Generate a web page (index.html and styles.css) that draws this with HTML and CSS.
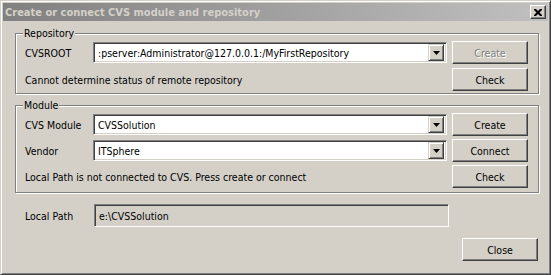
FILE: index.html
```html
<!DOCTYPE html>
<html lang="en">
<head>
  <meta charset="UTF-8">
  <title>Create or connect CVS module and repository</title>
  <link rel="stylesheet" href="styles.css">
</head>
<body>
  <div class="window">
    <div class="titlebar">
      <span class="title">Create or connect CVS module and repository</span>
      <span class="close-box">
        <svg width="8" height="7" viewBox="0 0 8 7">
          <path d="M0 0h2l2 2 2-2h2v1l-2.5 2.5 2.5 2.5v1h-2l-2-2-2 2h-2v-1l2.5-2.5-2.5-2.5z" fill="#000"/>
        </svg>
      </span>
    </div>

    <div class="content">
      <fieldset class="group">
        <legend>Repository</legend>
        <div class="grid">
          <span class="label">CVSROOT</span>
          <div class="combo">
            <span class="combo-text">:pserver:Administrator@127.0.0.1:/MyFirstRepository</span>
            <span class="drop"><svg width="7" height="4" viewBox="0 0 7 4"><path d="M0 0h7l-3.5 4z" fill="#000"/></svg></span>
          </div>
          <button class="btn" disabled>Create</button>

          <span class="note">Cannot determine status of remote repository</span>
          <button class="btn">Check</button>
        </div>
      </fieldset>

      <fieldset class="group group-module">
        <legend>Module</legend>
        <div class="grid grid-module">
          <span class="label">CVS Module</span>
          <div class="combo">
            <span class="combo-text">CVSSolution</span>
            <span class="drop"><svg width="7" height="4" viewBox="0 0 7 4"><path d="M0 0h7l-3.5 4z" fill="#000"/></svg></span>
          </div>
          <button class="btn">Create</button>

          <span class="label">Vendor</span>
          <div class="combo">
            <span class="combo-text">ITSphere</span>
            <span class="drop"><svg width="7" height="4" viewBox="0 0 7 4"><path d="M0 0h7l-3.5 4z" fill="#000"/></svg></span>
          </div>
          <button class="btn">Connect</button>

          <span class="note">Local Path is not connected to CVS. Press create or connect</span>
          <button class="btn">Check</button>
        </div>
      </fieldset>

      <div class="path-row">
        <span class="label">Local Path</span>
        <div class="field">e:\CVSSolution</div>
      </div>

      <div class="footer">
        <button class="btn btn-close">Close</button>
      </div>
    </div>
  </div>
</body>
</html>
```

FILE: styles.css
```css
body {
  margin: 0;
  padding: 0;
  background: #d4d0c8;
  font-family: "DejaVu Sans Condensed", "Liberation Sans", sans-serif;
  font-size: 10px;
  color: #000;
}
.window {
  width: 551px;
  height: 275px;
  box-sizing: border-box;
  padding: 2px;
  background: #d4d0c8;
  border: 1px solid;
  border-color: #d4d0c8 #404040 #404040 #d4d0c8;
  box-shadow: inset 1px 1px 0 #fff, inset -1px -1px 0 #808080;
}
.titlebar {
  height: 18px;
  display: flex;
  align-items: center;
  justify-content: space-between;
  padding: 0 2px 0 2px;
  background: linear-gradient(to right, #808080, #c0c0c0);
}
.title {
  color: #d4d0c8;
  font-size: 11px;
  font-weight: bold;
}
.close-box {
  width: 16px;
  height: 14px;
  box-sizing: border-box;
  display: flex;
  align-items: center;
  justify-content: center;
  background: #d4d0c8;
  border: 1px solid;
  border-color: #fff #404040 #404040 #fff;
  box-shadow: inset -1px -1px 0 #808080;
}
.content {
  padding: 6px 0 0 12px;
}
.group {
  margin: 0;
  width: 524px;
  box-sizing: border-box;
  padding: 1px 9px 2px 9px;
  border: 1px solid #808080;
  box-shadow: inset 1px 1px 0 #fff, 1px 1px 0 #fff;
}
.group legend {
  padding: 0 1px;
  margin-left: -2px;
  line-height: 13px;
  font-size: 10.5px;
  background: #d4d0c8;
}
.group-module {
  margin-top: 5px;
  padding-bottom: 4px;
}
.grid {
  display: grid;
  grid-template-columns: 63px 354px 76px;
  grid-auto-rows: 23px;
  column-gap: 5px;
  row-gap: 4px;
  align-items: center;
}
.grid-module {
  row-gap: 3px;
}
.label,
.note {
  font-size: 10.5px;
}
.note {
  grid-column: 1 / 3;
}
.combo {
  height: 21px;
  box-sizing: border-box;
  display: flex;
  align-items: center;
  justify-content: space-between;
  padding: 0 2px 0 3px;
  background: #fff;
  border: 1px solid;
  border-color: #808080 #fff #fff #808080;
  box-shadow: inset 1px 1px 0 #404040, inset -1px -1px 0 #d4d0c8;
}
.combo-text {
  padding-left: 1px;
  font-size: 10.5px;
}
.drop {
  width: 16px;
  height: 17px;
  box-sizing: border-box;
  display: flex;
  align-items: center;
  justify-content: center;
  background: #d4d0c8;
  border: 1px solid;
  border-color: #d4d0c8 #404040 #404040 #d4d0c8;
  box-shadow: inset 1px 1px 0 #fff, inset -1px -1px 0 #808080;
}
.btn {
  height: 23px;
  padding: 0;
  font-family: inherit;
  font-size: 10.5px;
  color: #000;
  background: #d4d0c8;
  border: 1px solid;
  border-color: #fff #404040 #404040 #fff;
  box-shadow: inset -1px -1px 0 #808080;
}
.btn:disabled {
  color: #808080;
  text-shadow: 1px 1px 0 #fff;
}
.path-row {
  display: flex;
  align-items: center;
  margin-top: 11px;
  padding-left: 10px;
}
.path-row .label {
  width: 69px;
}
.field {
  width: 355px;
  height: 23px;
  box-sizing: border-box;
  display: flex;
  align-items: center;
  padding-left: 4px;
  font-size: 10.5px;
  border: 1px solid;
  border-color: #808080 #fff #fff #808080;
  box-shadow: inset 1px 1px 0 #404040, inset -1px -1px 0 #d4d0c8;
}
.footer {
  display: flex;
  justify-content: flex-end;
  margin-top: 11px;
  padding-right: 10px;
}
.btn-close {
  width: 76px;
}
```
